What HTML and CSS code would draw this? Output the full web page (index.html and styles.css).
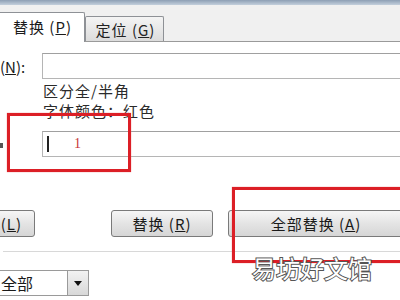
FILE: index.html
```html
<!DOCTYPE html>
<html lang="zh-CN">
<head>
  <meta charset="UTF-8" />
  <title>查找和替换</title>
  <link rel="stylesheet" href="styles.css">
</head>
<body>
  <div class="dialog">
    <div class="titlebar"></div>

    <div class="tabs">
      <div class="tab active">替换 (<u>P</u>)</div>
      <div class="tab">定位 (<u>G</u>)</div>
    </div>

    <div class="panel">
      <div class="field-row first">
        <span class="label">(<u>N</u>):</span>
        <div class="input"></div>
      </div>

      <div class="options">
        <div>区分全/半角</div>
        <div>字体颜色：红色</div>
      </div>

      <div class="field-row second">
        <span class="label"><span class="mark"></span></span>
        <div class="input">
          <span class="caret"></span>
          <span class="typed">1</span>
        </div>
      </div>

      <div class="buttons">
        <div class="button more">(<u>L</u>)</div>
        <div class="button replace">替换 (<u>R</u>)</div>
        <div class="button replace-all">全部替换 (<u>A</u>)</div>
      </div>

      <div class="separator"></div>

      <div class="select">
        <span class="select-value">全部</span>
        <span class="select-arrow"></span>
      </div>
    </div>

    <!-- annotations drawn over the screenshot -->
    <div class="highlight box-one"></div>
    <div class="highlight box-two"></div>
    <div class="watermark">易坊好文馆</div>
  </div>
</body>
</html>
```

FILE: styles.css
```css
body {
  margin: 0;
  font-family: "Noto Sans CJK SC", sans-serif;
  background-color: #fff;
  color: #1a1a1a;
  overflow: hidden;
}

.dialog {
  position: relative;
  width: 400px;
  height: 300px;
  overflow: hidden;
}

.titlebar {
  height: 5px;
  background: linear-gradient(to bottom, #8d9fb4, #c3cfdc);
}

.tabs {
  height: 36px;
  background-color: #f0f0f0;
  border-bottom: 1px solid #9a9a9a;
  display: flex;
  align-items: flex-end;
}

.tab {
  font-size: 15px;
  line-height: 1;
  display: flex;
  align-items: center;
  justify-content: center;
  box-sizing: border-box;
  border: 1px solid #8e9196;
  border-bottom: none;
  border-radius: 2px 2px 0 0;
  letter-spacing: 1px;
  white-space: pre;
}

.tab.active {
  margin-left: -4px;
  width: 89px;
  height: 30px;
  margin-bottom: -1px;
  background-color: #fff;
  padding-left: 4px;
  padding-bottom: 2px;
}

.tab:not(.active) {
  width: 79px;
  height: 25px;
  background: linear-gradient(to bottom, #f4f4f4, #dcdcdc);
  color: #222;
  padding-left: 2px;
}

.panel {
  background-color: #fff;
}

.field-row {
  display: flex;
  align-items: center;
}

.field-row.first {
  margin-top: 11px;
}

.field-row.second {
  margin-top: 10px;
}

.label {
  width: 42px;
  font-size: 15px;
  display: flex;
  align-items: center;
}

.mark {
  display: inline-block;
  width: 3px;
  height: 5px;
  margin-top: 2px;
  background-color: #555;
}

.input {
  flex: 1;
  height: 26px;
  margin-right: -4px;
  box-sizing: border-box;
  border: 1px solid #b5b5b5;
  border-top-color: #a0a0a0;
  display: flex;
  align-items: center;
}

.caret {
  width: 2px;
  height: 16px;
  margin-left: 4px;
  background-color: #222;
}

.typed {
  margin-left: 25px;
  font-family: "Liberation Serif", serif;
  font-size: 14px;
  color: #c8383a;
}

.options {
  margin: 2px 0 0 43px;
  font-size: 15px;
  letter-spacing: 1px;
  line-height: 20px;
  color: #2a2a2a;
}

.buttons {
  display: flex;
  margin: 53px 0 0 -67px;
}

.button {
  height: 27px;
  box-sizing: border-box;
  border: 1px solid #7a7a7a;
  border-radius: 3px;
  background: linear-gradient(to bottom, #f6f6f6, #e4e4e4 50%, #d6d6d6);
  font-size: 15px;
  letter-spacing: 1px;
  white-space: pre;
  display: flex;
  align-items: center;
  justify-content: center;
  flex-shrink: 0;
}

.button.more {
  width: 102px;
  justify-content: flex-end;
  padding-right: 12px;
}

.button.replace {
  width: 102px;
  margin-left: 76px;
}

.button.replace-all {
  width: 176px;
  margin-left: 15px;
}

.separator {
  margin: 14px 0 0 3px;
  height: 1px;
  background-color: #d8d8d8;
}

.select {
  margin: 18px 0 0 -4px;
  width: 93px;
  height: 26px;
  box-sizing: border-box;
  border: 1px solid #9a9a9a;
  display: flex;
  align-items: center;
  justify-content: space-between;
}

.select-value {
  font-size: 16px;
  padding-left: 4px;
}

.select-arrow {
  width: 21px;
  height: 24px;
  box-sizing: border-box;
  border-left: 1px solid #9a9a9a;
  background: linear-gradient(to bottom, #f2f2f2, #d8d8d8);
  position: relative;
}

.select-arrow::after {
  content: "";
  position: absolute;
  left: 6px;
  top: 10px;
  border-left: 4px solid transparent;
  border-right: 4px solid transparent;
  border-top: 5px solid #111;
}

.highlight {
  position: absolute;
  border: 3px solid #dc1f26;
  box-shadow: 0 0 1px #e77;
}

.box-one {
  left: 7px;
  top: 113px;
  width: 118px;
  height: 53px;
}

.box-two {
  left: 232px;
  top: 187px;
  width: 180px;
  height: 70px;
}

.watermark {
  position: absolute;
  left: 252px;
  top: 252px;
  font-size: 24px;
  line-height: 32px;
  color: #fff;
  -webkit-text-stroke: 2px #555;
  paint-order: stroke fill;
}
```
